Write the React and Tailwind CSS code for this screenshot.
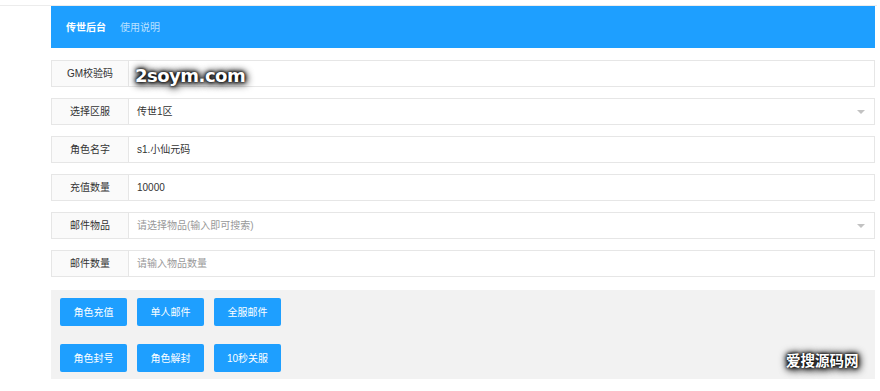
import React from "react";

const font = { fontFamily: '"Liberation Sans", "Noto Sans CJK SC", sans-serif' };

function Row({ label, value, placeholder, select }) {
  return (
    <div className="flex h-[27px] w-full">
      <div className="flex w-[78px] shrink-0 items-center justify-center border border-[#e6e6e6] bg-[#fafafa] text-[10px] text-[#333]">
        {label}
      </div>
      <div className="relative flex flex-1 items-center border border-l-0 border-[#e6e6e6] bg-white pl-[8px] text-[10px]">
        {value ? (
          <span className="text-[#333]">{value}</span>
        ) : (
          <span className="text-[#999]">{placeholder}</span>
        )}
        {select && (
          <span className="absolute right-[9px] top-[11px] h-0 w-0 border-x-[4px] border-t-[4px] border-x-transparent border-t-[#c2c2c2]" />
        )}
      </div>
    </div>
  );
}

function Btn({ children }) {
  return (
    <div className="flex h-[28px] w-[67px] items-center justify-center rounded-[2px] bg-[#1e9fff] text-[10px] text-white">
      {children}
    </div>
  );
}

const glow = "0 0 3px #000, 0 0 5px #000, 0 0 8px #000, 1px 2px 8px #000";

export default function App() {
  return (
    <div className="relative h-[391px] w-[880px] overflow-hidden bg-white" style={font}>
      <div className="h-[6px] w-[877px] border-b border-[#ececec]" />
      <div className="ml-[51px] w-[824px]">
        <div className="flex h-[42px] items-center gap-[14px] bg-[#1e9fff] pl-[15px] text-[10px]">
          <span className="font-bold text-white">传世后台</span>
          <span className="text-white/70">使用说明</span>
        </div>
        <div className="mt-[12px] flex flex-col gap-[11px]">
          <Row label="GM校验码" value="" placeholder="" />
          <Row label="选择区服" value="传世1区" select />
          <Row label="角色名字" value="s1.小仙元码" />
          <Row label="充值数量" value="10000" />
          <Row label="邮件物品" placeholder="请选择物品(输入即可搜索)" select />
          <Row label="邮件数量" placeholder="请输入物品数量" />
        </div>
        <div className="mt-[13px] flex h-[89px] flex-col gap-[18px] bg-[#f2f2f2] pl-[9px] pt-[8px]">
          <div className="flex gap-[10px]">
            <Btn>角色充值</Btn>
            <Btn>单人邮件</Btn>
            <Btn>全服邮件</Btn>
          </div>
          <div className="flex gap-[10px]">
            <Btn>角色封号</Btn>
            <Btn>角色解封</Btn>
            <Btn>10秒关服</Btn>
          </div>
        </div>
      </div>
      <div
        className="absolute left-[135px] top-[62px] text-[18px] font-bold text-white"
        style={{ fontFamily: '"DejaVu Sans", sans-serif', textShadow: glow, letterSpacing: "-0.5px" }}
      >
        2soym.com
      </div>
      <div
        className="absolute left-[786px] top-[351px] text-[14.5px] font-bold text-white"
        style={{ fontFamily: '"Noto Sans CJK SC", sans-serif', textShadow: glow, lineHeight: "18px" }}
      >
        爱搜源码网
      </div>
    </div>
  );
}
